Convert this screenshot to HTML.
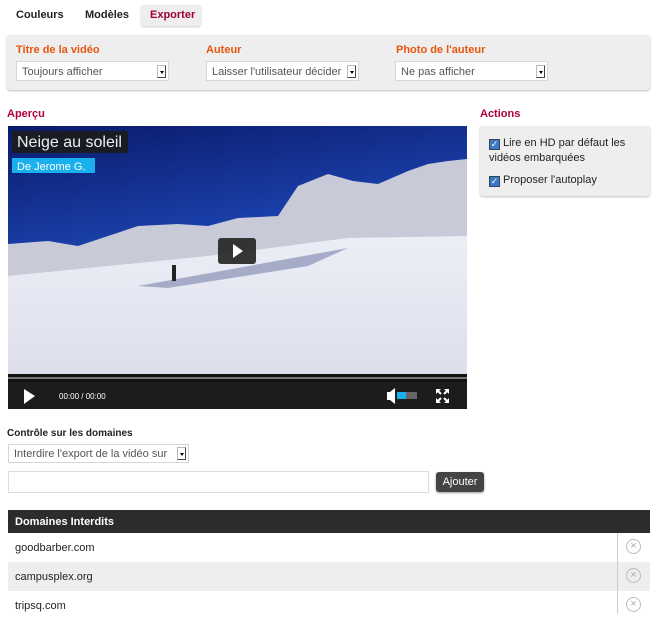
<!DOCTYPE html>
<html><head><meta charset="utf-8"><style>
*{box-sizing:border-box;margin:0;padding:0}
body{width:656px;height:614px;overflow:hidden;background:#fff;font-family:"Liberation Sans",Arial,sans-serif;font-size:11px;color:#222;position:relative}
.a{position:absolute}
.tab{font-weight:bold;font-size:11px;top:9px}
.panel{background:#eeeeee;border-radius:3px;box-shadow:0 1px 2px rgba(0,0,0,.25)}
.lbl{color:#e8550f;font-weight:bold;font-size:11px}
.sel{background:#fff;border:1px solid #d6d6d6;height:20px;font-size:11px;color:#555;padding:4px 0 0 5px;white-space:nowrap;overflow:hidden}
.sel i{position:absolute;right:2px;top:3px;width:9px;height:13px;background:#fff;border:1px solid #bbb;border-right-color:#444;border-bottom-color:#444}
.sel i:after{content:"";position:absolute;left:2px;top:5px;border:2px solid transparent;border-top:3px solid #000}
.h{color:#b0003a;font-weight:bold;font-size:11px}
.row{left:8px;width:642px;height:29px;font-size:11px;padding:9px 0 0 7px}
.x{position:absolute;left:618px;top:6px;width:15px;height:15px;border:1px solid #bbb;border-radius:50%;color:#aaa;font-size:11px;line-height:12px;text-align:center}
.cb{display:inline-block;width:11px;height:11px;background:#3a78c8;border:1px solid #345;vertical-align:-1px;color:#fff;font-size:9px;line-height:9px;text-align:center;margin-right:3px}
</style></head><body>
<div class="a tab" style="left:16px">Couleurs</div>
<div class="a tab" style="left:85px">Modèles</div>
<div class="a" style="left:141px;top:5px;width:60px;height:21px;background:#eee;border-radius:3px;box-shadow:0 1px 2px rgba(0,0,0,.2)"></div>
<div class="a tab" style="left:150px;color:#a0003a">Exporter</div>

<div class="a panel" style="left:7px;top:35px;width:643px;height:55px"></div>
<div class="a lbl" style="left:16px;top:44px">Titre de la vidéo</div>
<div class="a lbl" style="left:206px;top:44px">Auteur</div>
<div class="a lbl" style="left:396px;top:44px">Photo de l'auteur</div>
<div class="a sel" style="left:16px;top:61px;width:153px">Toujours afficher<i></i></div>
<div class="a sel" style="left:206px;top:61px;width:153px">Laisser l'utilisateur décider<i></i></div>
<div class="a sel" style="left:395px;top:61px;width:153px">Ne pas afficher<i></i></div>

<div class="a h" style="left:7px;top:108px">Aperçu</div>
<div class="a h" style="left:480px;top:108px">Actions</div>
<div class="a panel" style="left:480px;top:126px;width:170px;height:70px"></div>
<div class="a" style="left:489px;top:136px;font-size:11px;line-height:15px;width:160px"><span class="cb">✓</span>Lire en HD par défaut les<br>vidéos embarquées</div>
<div class="a" style="left:489px;top:174px;font-size:11px"><span class="cb">✓</span>Proposer l'autoplay</div>

<svg class="a" style="left:8px;top:126px" width="459" height="283" viewBox="0 0 459 283">
<defs><linearGradient id="sky" x1="0" y1="0" x2="0.3" y2="1"><stop offset="0" stop-color="#0a1a6a"/><stop offset="0.6" stop-color="#1d48b8"/><stop offset="1" stop-color="#4f7ad0"/></linearGradient>
<linearGradient id="snow" x1="0" y1="0" x2="0" y2="1"><stop offset="0" stop-color="#eceef6"/><stop offset="1" stop-color="#dcdeec"/></linearGradient></defs>
<rect width="459" height="250" fill="url(#sky)"/>
<path d="M0 118 L40 115 L70 120 L130 100 L170 98 L200 100 L230 92 L270 90 L290 60 L320 48 L345 55 L370 58 L400 45 L420 38 L440 35 L459 33 L459 250 L0 250Z" fill="#c8cad8"/>
<path d="M0 150 L100 140 L200 130 L340 112 L459 110 L459 250 L0 250Z" fill="url(#snow)"/>
<path d="M130 160 L340 122 L300 140 L160 162Z" fill="#a6acc8"/>
<rect x="164" y="139" width="4" height="16" fill="#222"/>
<rect x="0" y="248" width="459" height="8" fill="#111"/>
<rect x="0" y="251" width="459" height="2" fill="#777"/>
<rect x="0" y="256" width="459" height="27" fill="#1c1c1c"/>
<path d="M16 263 L27 270 L16 278Z" fill="#fff"/>
<path d="M379 266 L382 266 L387 262 L387 278 L382 274 L379 274Z" fill="#fff"/>
<rect x="389" y="266" width="20" height="7" fill="#666"/><rect x="389" y="266" width="9" height="7" fill="#1ab0ee"/>
<path d="M428 263h5l-5 5zM441 263h-5l5 5zM428 277h5l-5-5zM441 277h-5l5-5z" fill="#fff"/>
<path d="M429 264l4 4M440 264l-4 4M429 276l4-4M440 276l-4-4" stroke="#fff" stroke-width="2"/>
<rect x="4" y="5" width="116" height="22" fill="#1c1c1c" opacity="0.9"/>
<text x="9" y="21" fill="#eee" font-size="16" font-family="Liberation Sans">Neige au soleil</text>
<rect x="4" y="32" width="83" height="15" fill="#1ab0ee"/>
<text x="9" y="44" fill="#fff" font-size="11" font-family="Liberation Sans">De Jerome G.</text>
<rect x="210" y="112" width="38" height="26" rx="3" fill="#222" opacity="0.9"/>
<path d="M225 118 L235 125 L225 132Z" fill="#fff"/>
<text x="51" y="273" fill="#fff" font-size="8" font-family="Liberation Sans">00:00 / 00:00</text>
</svg>

<div class="a" style="left:7px;top:428px;font-weight:bold;font-size:10px">Contrôle sur les domaines</div>
<div class="a sel" style="left:8px;top:444px;width:181px;height:19px;padding-top:3px">Interdire l'export de la vidéo sur<i style="top:2px"></i></div>
<div class="a" style="left:8px;top:471px;width:421px;height:22px;border:1px solid #ddd;background:#fff"></div>
<div class="a" style="left:436px;top:472px;width:48px;height:20px;background:#444;border-radius:3px;color:#fff;font-size:11px;text-align:center;line-height:20px;box-shadow:0 1px 2px rgba(0,0,0,.4)">Ajouter</div>

<div class="a" style="left:8px;top:510px;width:642px;height:23px;background:#2c2c2c;color:#fff;font-weight:bold;font-size:11px;padding:6px 0 0 7px">Domaines Interdits</div>
<div class="a row" style="top:533px;background:#fff">goodbarber.com<span class="x">×</span></div>
<div class="a row" style="top:562px;background:#eee">campusplex.org<span class="x">×</span></div>
<div class="a row" style="top:591px;background:#fff">tripsq.com<span class="x">×</span></div>
<div class="a" style="left:617px;top:533px;width:1px;height:81px;background:#ccc"></div>
</body></html>
